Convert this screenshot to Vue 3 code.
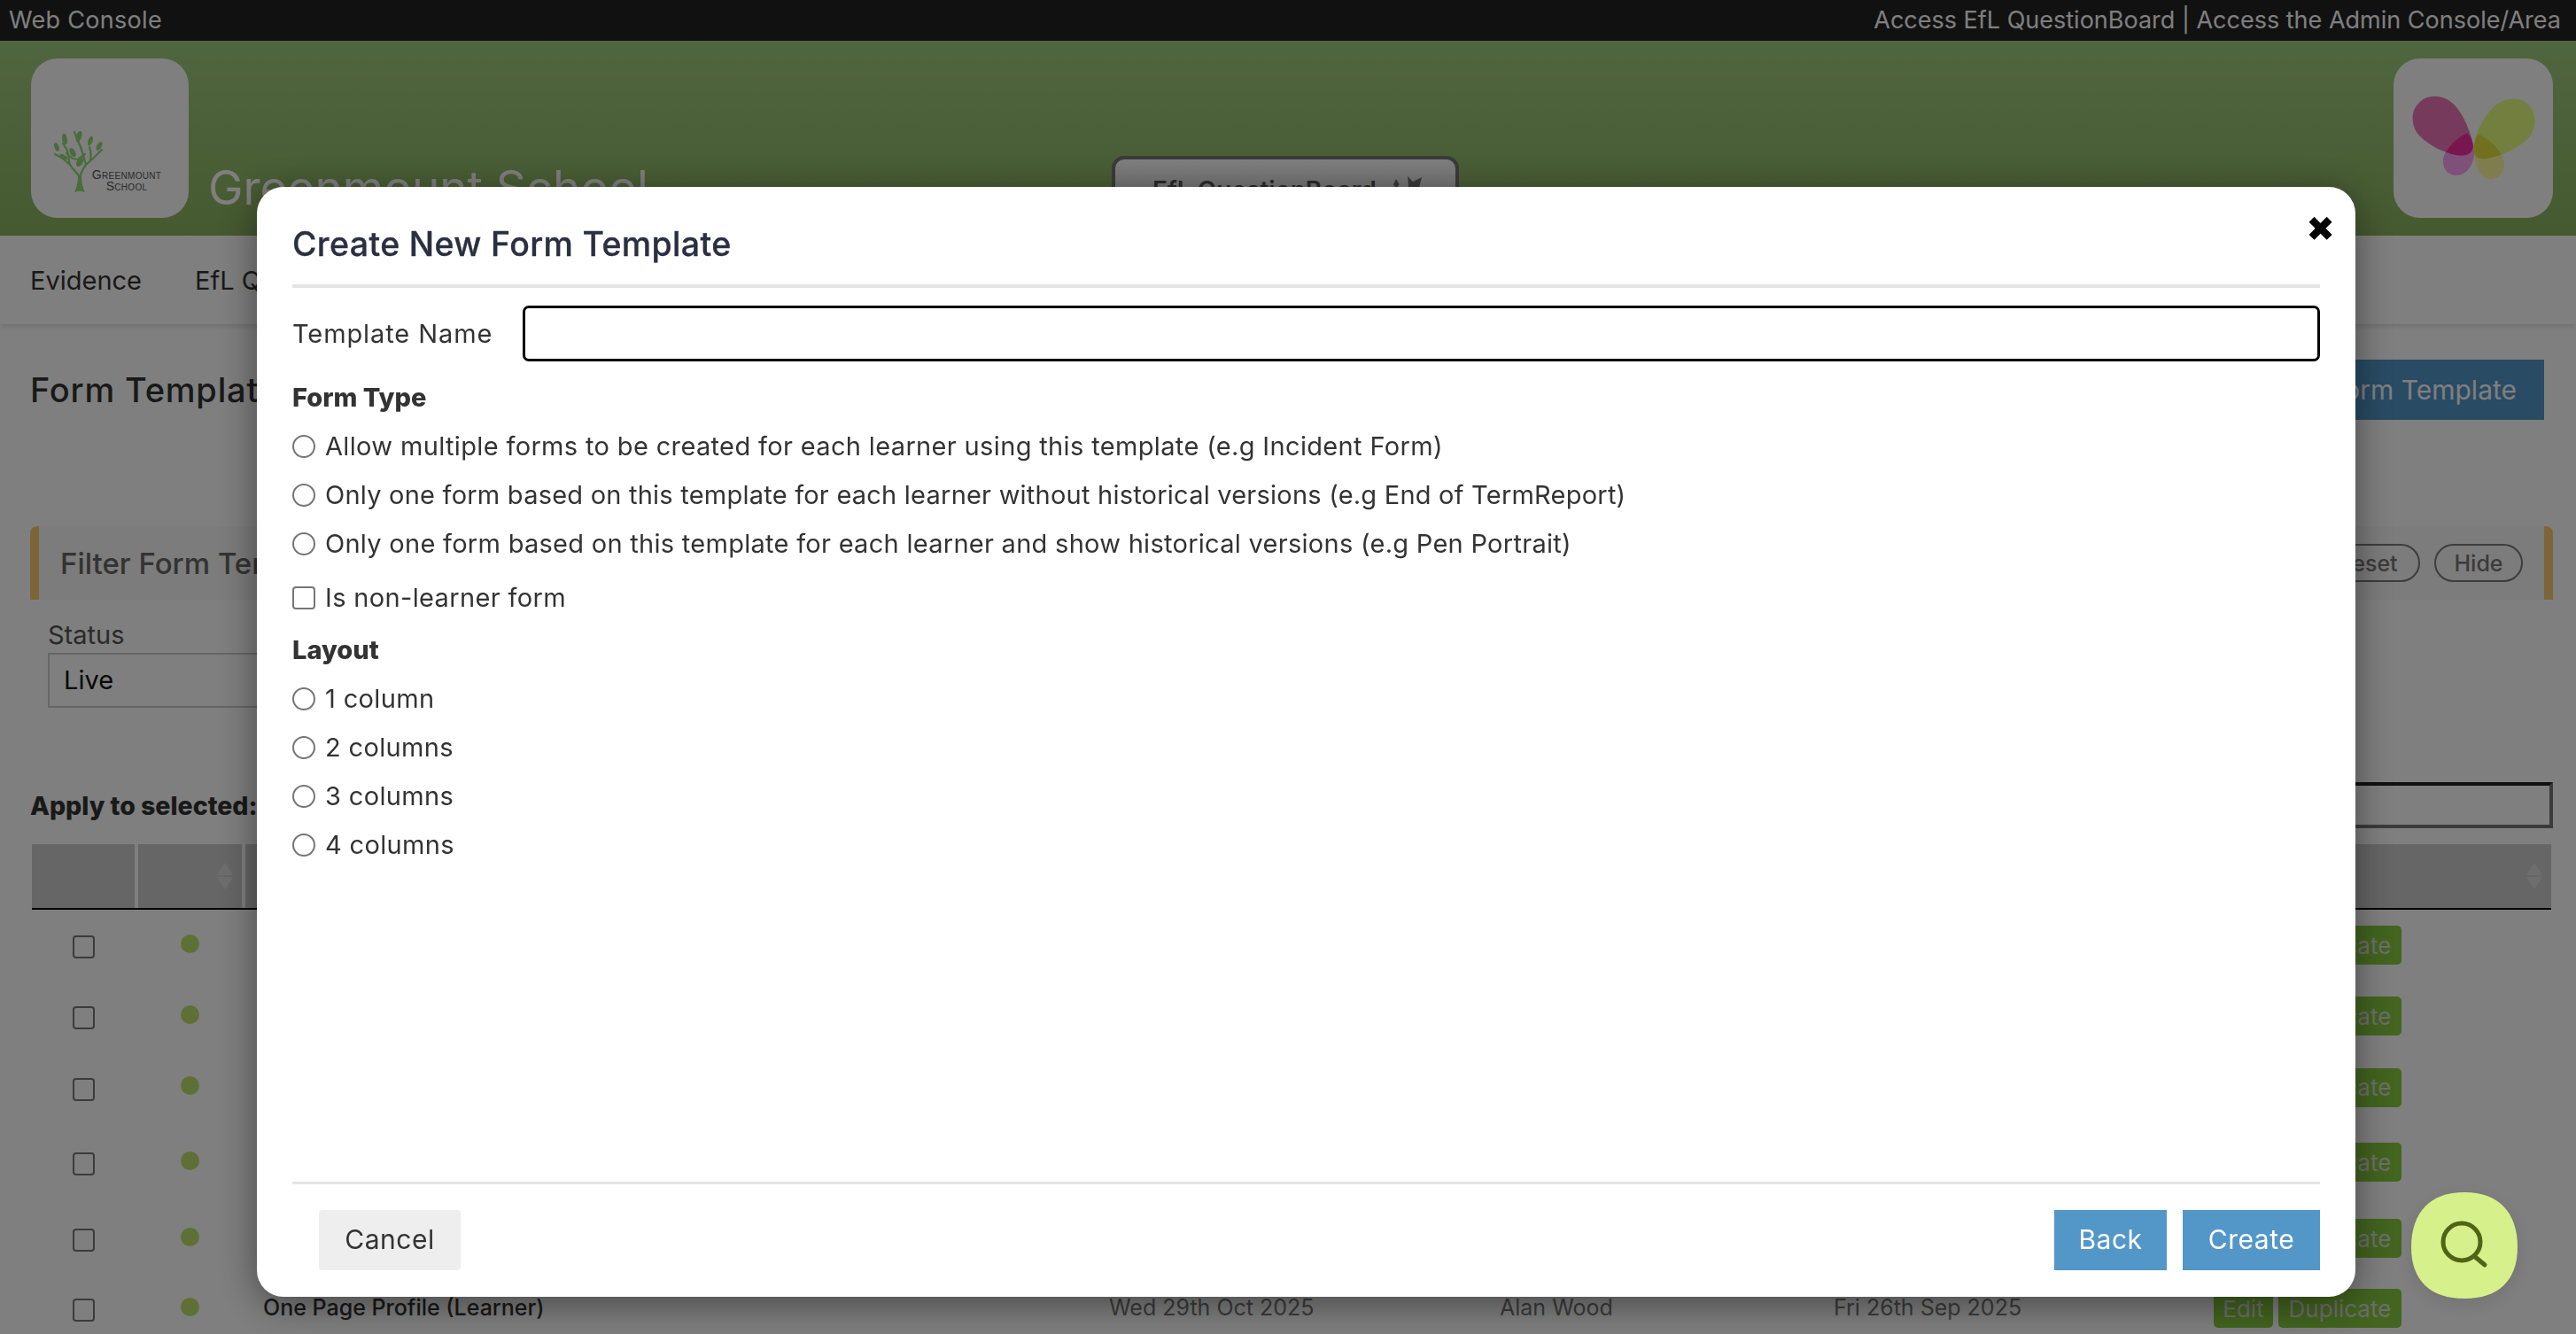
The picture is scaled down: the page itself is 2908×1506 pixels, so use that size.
<script setup>
const formTypes = [
  { text: 'Allow multiple forms to be created for each learner using this template (e.g Incident Form)', fit: 'fit-a' },
  { text: 'Only one form based on this template for each learner without historical versions (e.g End of TermReport)', fit: 'fit-b' },
  { text: 'Only one form based on this template for each learner and show historical versions (e.g Pen Portrait)', fit: 'fit-c' }
]
const layouts = ['1 column', '2 columns', '3 columns', '4 columns']
const rows = [
  { h: 78 }, { h: 82 }, { h: 79 }, { h: 90 }, { h: 82 },
  { h: 76, name: 'One Page Profile (Learner)', date: 'Wed 29th Oct 2025', author: 'Alan Wood', updated: 'Fri 26th Sep 2025' }
]
</script>

<template>
  <div class="page">
    <div class="topbar">
      <span class="console">Web Console</span>
      <span>Access EfL QuestionBoard | Access the Admin Console/Area</span>
    </div>
    <header class="header">
      <div class="brand">
        <div class="logo-card school-logo">
          <svg class="tree" viewBox="0 0 56 70" width="56" height="70">
            <path d="M24 69c3-6 4-12 4-19l4 0c0 7 1 13 4 19-4-2-8-2-12 0z" fill="#90d874"/>
            <g fill="none" stroke="#90d874" stroke-width="2.200" stroke-linecap="round" stroke-linejoin="round">
              <path d="M30 52C26 46 22 43 19 38L11 31 2 26"/>
              <path d="M19 38C17 32 18 26 15 20L11 14"/>
              <path d="M30 52C32 46 33 43 37 38L47 29 55 21"/>
              <path d="M37 38C35 32 34 26 31 18L24 1"/>
              <path d="M42 33C43 28 43 24 41 18"/>
              <path d="M15 25L22 31 28 32 36 26"/>
            </g>
            <g fill="#90d874">
              <ellipse cx="13" cy="9" rx="2.800" ry="6.500" transform="rotate(-8 13 9)"/>
              <ellipse cx="29" cy="6" rx="3" ry="6.500" transform="rotate(18 29 6)"/>
              <ellipse cx="42" cy="11" rx="2.600" ry="5.500" transform="rotate(20 42 11)"/>
              <ellipse cx="4" cy="18" rx="2.500" ry="5" transform="rotate(-20 4 18)"/>
              <ellipse cx="52" cy="17" rx="2.600" ry="5.500" transform="rotate(28 52 17)"/>
              <ellipse cx="22" cy="24" rx="3" ry="5.500" transform="rotate(-30 22 24)"/>
              <ellipse cx="30" cy="35" rx="3.400" ry="5.500" transform="rotate(30 30 35)"/>
              <ellipse cx="12" cy="29" rx="2" ry="5" transform="rotate(-60 12 29)"/>
            </g>
          </svg>
          <div class="school-mark"><span>Greenmount</span><span>School</span></div>
        </div>
        <div class="school-name">Greenmount School</div>
      </div>
      <button class="board-btn">
        <span>EfL QuestionBoard</span>
        <svg viewBox="0 0 36 36" width="36" height="36">
          <path d="M4 3l3.500 6-3.500 6-3-6zM17 0l6 6 10-5-3 12 4 7-11-3-8 5 3-11z" fill="#757575"/>
        </svg>
      </button>
      <div class="logo-card butterfly-card">
        <svg viewBox="0 0 180 180" width="180" height="180">
          <defs>
            <clipPath id="wingL"><path d="M90 98C87 82 78 60 66 50 55 41 38 40 29 50 18 60 20 78 30 88 40 98 56 106 70 109 82 111 90 108 90 98z"/></clipPath>
            <clipPath id="wingR"><path d="M91 105C90 88 100 68 112 56 122 45 140 42 150 50 162 60 163 78 152 90 142 101 122 110 105 113 97 114 91 112 91 105z"/></clipPath>
          </defs>
          <path d="M90 98C87 82 78 60 66 50 55 41 38 40 29 50 18 60 20 78 30 88 40 98 56 106 70 109 82 111 90 108 90 98z" fill="#ec76b8"/>
          <path d="M91 105C90 88 100 68 112 56 122 45 140 42 150 50 162 60 163 78 152 90 142 101 122 110 105 113 97 114 91 112 91 105z" fill="#e4fe7c"/>
          <path d="M83 84C88 88 91 96 91 106 91 120 82 132 71 132 61 132 55 124 56 114 57 104 70 90 83 84z" fill="#ffa0f4"/>
          <path d="M96 86C91 90 90 98 91 106 92 122 98 136 109 136 119 136 126 128 125 118 124 106 108 90 96 86z" fill="#fffa9c"/>
          <g clip-path="url(#wingL)"><path d="M83 84C88 88 91 96 91 106 91 120 82 132 71 132 61 132 55 124 56 114 57 104 70 90 83 84z" fill="#f42c9e"/></g>
          <g clip-path="url(#wingR)"><path d="M96 86C91 90 90 98 91 106 92 122 98 136 109 136 119 136 126 128 125 118 124 106 108 90 96 86z" fill="#e0e03e"/></g>
        </svg>
      </div>
    </header>
    <nav class="nav">
      <a>Evidence</a>
      <a>EfL QuestionBoard</a>
    </nav>
    <main class="main">
      <div class="page-head">
        <h1>Form Templates</h1>
        <button class="new-btn">Create New Form Template</button>
      </div>
      <div class="filter-bar">
        <span class="filter-title">Filter Form Templates</span>
        <div class="pills">
          <button class="pill reset">Reset</button>
          <button class="pill hide">Hide</button>
        </div>
      </div>
      <div class="status">
        <label>Status</label>
        <div class="status-select">Live</div>
      </div>
      <div class="apply">
        <strong>Apply to selected:</strong>
        <input class="search" type="text" />
      </div>
      <div class="thead">
        <div class="th th-a"></div>
        <div class="th th-b">
          <svg class="sort" viewBox="0 0 18 30" width="18" height="30"><path d="M9 0l9 14H0zM0 16h18L9 30z"/></svg>
        </div>
        <div class="th th-c">
          <svg class="sort" viewBox="0 0 18 30" width="18" height="30"><path d="M9 0l9 14H0zM0 16h18L9 30z"/></svg>
        </div>
      </div>
      <div v-for="(r, i) in rows" :key="i" class="row" :style="{ height: r.h + 'px' }">
        <span class="cell-center"><input class="row-check" type="checkbox" /></span>
        <span class="cell-center"><i class="dot"></i></span>
        <span class="name">{{ r.name }}</span>
        <span class="meta">{{ r.date }}</span>
        <span class="meta">{{ r.author }}</span>
        <span class="meta">{{ r.updated }}</span>
        <span class="actions"><button class="act edit">Edit</button><button class="act dup">Duplicate</button></span>
      </div>
    </main>

    <div class="overlay">
      <section class="modal">
        <h2 class="modal-title">Create New Form Template</h2>
        <span class="close">✖</span>
        <div class="name-row">
          <label>Template Name</label>
          <input class="name-input" type="text" />
        </div>
        <h3 class="group first">Form Type</h3>
        <label v-for="t in formTypes" :key="t.fit" class="opt" :class="t.fit">
          <input class="radio" type="radio" name="ft" /><span>{{ t.text }}</span>
        </label>
        <label class="opt check-opt">
          <input class="check" type="checkbox" /><span>Is non-learner form</span>
        </label>
        <h3 class="group second">Layout</h3>
        <div class="layouts">
          <label v-for="l in layouts" :key="l" class="opt">
            <input class="radio" type="radio" name="lay" /><span>{{ l }}</span>
          </label>
        </div>
        <footer class="modal-foot">
          <button class="btn cancel">Cancel</button>
          <div class="foot-right">
            <button class="btn back">Back</button>
            <button class="btn create">Create</button>
          </div>
        </footer>
      </section>
    </div>

    <button class="fab" aria-label="Search">
      <svg viewBox="0 0 120 120" width="120" height="120">
        <path d="M60 0C98 0 120 22 120 62 120 100 98 120 60 120 22 120 0 100 0 62 0 22 22 0 60 0z" fill="#d6f08c"/>
        <circle cx="57" cy="56" r="21" fill="none" stroke="#4f6414" stroke-width="5"/>
        <path d="M71 72l12 10" fill="none" stroke="#4f6414" stroke-width="5" stroke-linecap="round"/>
      </svg>
    </button>
  </div>
</template>

<style>
html, body { margin: 0; background: #fff; }
</style>

<style scoped>
.page {
  width: 2908px;
  height: 1506px;
  overflow: hidden;
  position: relative;
  background: #fff;
  font-family: Inter, "Liberation Sans", sans-serif;
  color: #222;
  font-size: 28px;
}
button { font-family: inherit; border: 0; }
.topbar {
  height: 46px;
  background: #222;
  color: #fff;
  display: flex;
  justify-content: space-between;
  align-items: center;
  padding: 0 17px 0 10px;
  font-size: 27px;
  line-height: 46px;
}
.console { letter-spacing: 0.300px; }
.header {
  height: 220px;
  box-sizing: border-box;
  padding: 20px 26px 0 35px;
  display: grid;
  grid-template-columns: 1fr auto 1fr;
  align-items: start;
  background: linear-gradient(#a0cc80, #8cb460);
}
.brand { display: flex; align-items: flex-start; }
.logo-card {
  width: 178px;
  height: 180px;
  border-radius: 30px;
  background: #fff;
  flex: none;
}
.school-logo {
  display: flex;
  align-items: flex-end;
  box-sizing: border-box;
  padding: 0 0 28px 25px;
}
.tree { flex: none; }
.school-mark {
  display: flex;
  flex-direction: column;
  align-items: center;
  width: 74px;
  flex: none;
  margin: 0 0 1px -10px;
  font-family: "Liberation Sans", sans-serif;
  font-size: 14px;
  line-height: 13px;
  letter-spacing: 0.300px;
  font-variant: small-caps;
  white-space: nowrap;
  color: #555;
}
.school-name {
  font-size: 53px;
  line-height: 68px;
  color: #fff;
  margin: 112px 0 0 22px;
  white-space: nowrap;
}
.board-btn {
  margin: 110px 15px 0 0;
  width: 392px;
  height: 84px;
  box-sizing: border-box;
  border: 4px solid #757575;
  border-radius: 14px;
  background: linear-gradient(#fff, #ccc);
  font-size: 28px;
  font-weight: 600;
  color: #555;
  display: flex;
  align-items: flex-start;
  justify-content: flex-start;
  gap: 18px;
  padding: 18px 0 0 42px;
  white-space: nowrap;
}
.board-btn svg { flex: none; margin-top: 1px; }
.butterfly-card { justify-self: end; width: 180px; }
.nav {
  height: 100px;
  display: flex;
  align-items: center;
  gap: 60px;
  padding-left: 34px;
  font-size: 29px;
  color: #333;
  box-shadow: 0 3px 6px rgba(0,0,0,.12);
  position: relative;
}
.main { padding: 40px 26px 0 34px; }
.page-head { display: flex; justify-content: space-between; align-items: center; height: 68px; }
.page-head h1 { margin: 0; font-size: 38px; font-weight: 500; letter-spacing: 0.800px; color: #333; }
.new-btn {
  height: 68px;
  width: 460px;
  margin-right: 10px;
  padding: 0 31px 0 0;
  text-align: right;
  background: #5397c9;
  color: #fff;
  font-size: 30px;
}
.filter-bar {
  margin-top: 120px;
  height: 83px;
  box-sizing: border-box;
  border-left: 10px solid #f8ca70;
  border-right: 10px solid #f8ca70;
  border-radius: 8px 8px 0 0;
  background: #f8f8f8;
  padding: 0 24px;
  display: flex;
  align-items: center;
  justify-content: space-between;
}
.filter-title { font-size: 33px; font-weight: 500; color: #666; }
.pills { display: flex; gap: 16px; }
.pill {
  height: 43px;
  width: 100px;
  box-sizing: border-box;
  border: 2px solid #7a7a7a;
  border-radius: 22px;
  background: transparent;
  font-size: 25px;
  font-weight: 500;
  color: #777;
  padding: 0;
}
.reset { width: 118px; }
.status { margin: 20px 0 0 20px; }
.status label { display: block; line-height: 40px; color: #555; font-size: 29px; }
.status-select {
  width: 500px;
  height: 62px;
  box-sizing: border-box;
  border: 2px solid #ccc;
  padding-left: 16px;
  line-height: 58px;
  color: #111;
  font-size: 29px;
}
.apply {
  margin-top: 84px;
  height: 52px;
  display: flex;
  align-items: center;
  justify-content: space-between;
}
.apply strong { font-size: 28.500px; font-weight: 800; color: #333; }
.search {
  width: 600px;
  height: 52px;
  box-sizing: border-box;
  border: 4px solid;
  border-color: #222 #777 #777 #222;
  background: transparent;
}
.thead {
  margin: 18px 2px 0;
  height: 74px;
  box-sizing: border-box;
  border-bottom: 2px solid #000;
  display: flex;
  gap: 4px;
}
.th { background: #ccc; display: flex; align-items: center; justify-content: flex-end; padding-right: 10px; box-sizing: border-box; }
.th-a { width: 116px; }
.th-b { width: 117px; }
.th-c { flex: 1; }
.sort { fill: #ddd; }
.row {
  display: grid;
  grid-template-columns: 120px 121px 975px 441px 377px 429px 1fr;
  align-items: center;
  margin-left: 2px;
  box-sizing: border-box;
}
.cell-center { display: flex; justify-content: center; padding-right: 4px; }
.row-check {
  appearance: none;
  width: 25px;
  height: 26px;
  margin: 6px 0 0;
  border: 2px solid #767676;
  border-radius: 4px;
  background: #fff;
}
.dot { width: 21px; height: 21px; border-radius: 50%; background: #bfe06c; margin-bottom: 2px; }
.name { padding-left: 20px; font-size: 25px; font-weight: 500; color: #333; white-space: nowrap; }
.meta { font-size: 25px; color: #777; white-space: nowrap; }
.actions { display: flex; gap: 6px; margin-top: 2px; }
.act {
  height: 44px;
  background: #86ca3e;
  color: #ddd;
  font-size: 26px;
  border-radius: 5px;
  padding: 0;
}
.edit { width: 67px; }
.dup { width: 139px; }

.overlay {
  position: fixed;
  inset: 0;
  background: rgba(0,0,0,.5);
  box-sizing: border-box;
  padding: 211px 249px 42px 290px;
  display: flex;
}
.modal {
  flex: 1;
  position: relative;
  display: flex;
  flex-direction: column;
  box-sizing: border-box;
  padding: 0 40px;
  background: #fff;
  border-radius: 30px;
  box-shadow: 0 8px 44px rgba(0,0,0,.45);
  color: #333;
  font-size: 29px;
  letter-spacing: 0.350px;
}
.modal-title {
  margin: 0;
  padding: 43px 0 23px;
  line-height: 44px;
  height: 44px;
  border-bottom: 4px solid #e5e5e5;
  font-size: 37.500px;
  font-weight: 500;
  letter-spacing: 0.350px;
  color: #2a3040;
  -webkit-text-stroke: 0.300px #2a3040;
}
.close {
  position: absolute;
  top: 28px;
  right: 23px;
  font: 39px/40px "DejaVu Sans", sans-serif;
  letter-spacing: 0;
  color: #000;
}
.name-row { margin-top: 20px; height: 63px; display: flex; align-items: center; }
.name-row label { width: 260px; flex: none; letter-spacing: 0.900px; }
.name-input {
  flex: 1;
  height: 63px;
  box-sizing: border-box;
  border: 3px solid #000;
  border-radius: 7px;
  background: #fff;
}
.group { margin: 0; line-height: 40px; font-size: 29px; font-weight: 800; color: #333; letter-spacing: 0; }
.group.first { margin-top: 21px; margin-bottom: 7px; }
.group.second { margin-top: 12px; margin-bottom: 7px; }
.opt { display: flex; align-items: center; gap: 11px; height: 55px; white-space: nowrap; }
.fit-a { letter-spacing: 0.350px; }
.fit-b { letter-spacing: 0.225px; }
.fit-c { letter-spacing: 0.280px; }
.check-opt { margin-top: 6px; }
.radio, .check {
  appearance: none;
  flex: none;
  width: 26px;
  height: 26px;
  margin: 0;
  box-sizing: border-box;
  border: 2px solid #767676;
  background: #fff;
}
.radio { border-radius: 50%; }
.check { border-radius: 4px; }
.modal-foot {
  margin-top: auto;
  border-top: 3px solid #e5e5e5;
  padding: 29px 0 30px 30px;
  display: flex;
  justify-content: space-between;
}
.foot-right { display: flex; gap: 18px; }
.btn { height: 68px; font-size: 30px; letter-spacing: 0.500px; padding: 0 0 3px; box-sizing: border-box; }
.cancel { width: 160px; background: #eee; color: #333; border-radius: 4px; }
.back { width: 127px; background: #5397c9; color: #fff; }
.create { width: 155px; background: #5397c9; color: #fff; }
.fab {
  position: fixed;
  left: 2722px;
  top: 1346px;
  width: 120px;
  height: 120px;
  padding: 0;
  background: transparent;
  filter: drop-shadow(0 6px 10px rgba(0,0,0,.1));
}
.fab svg { display: block; }
</style>
